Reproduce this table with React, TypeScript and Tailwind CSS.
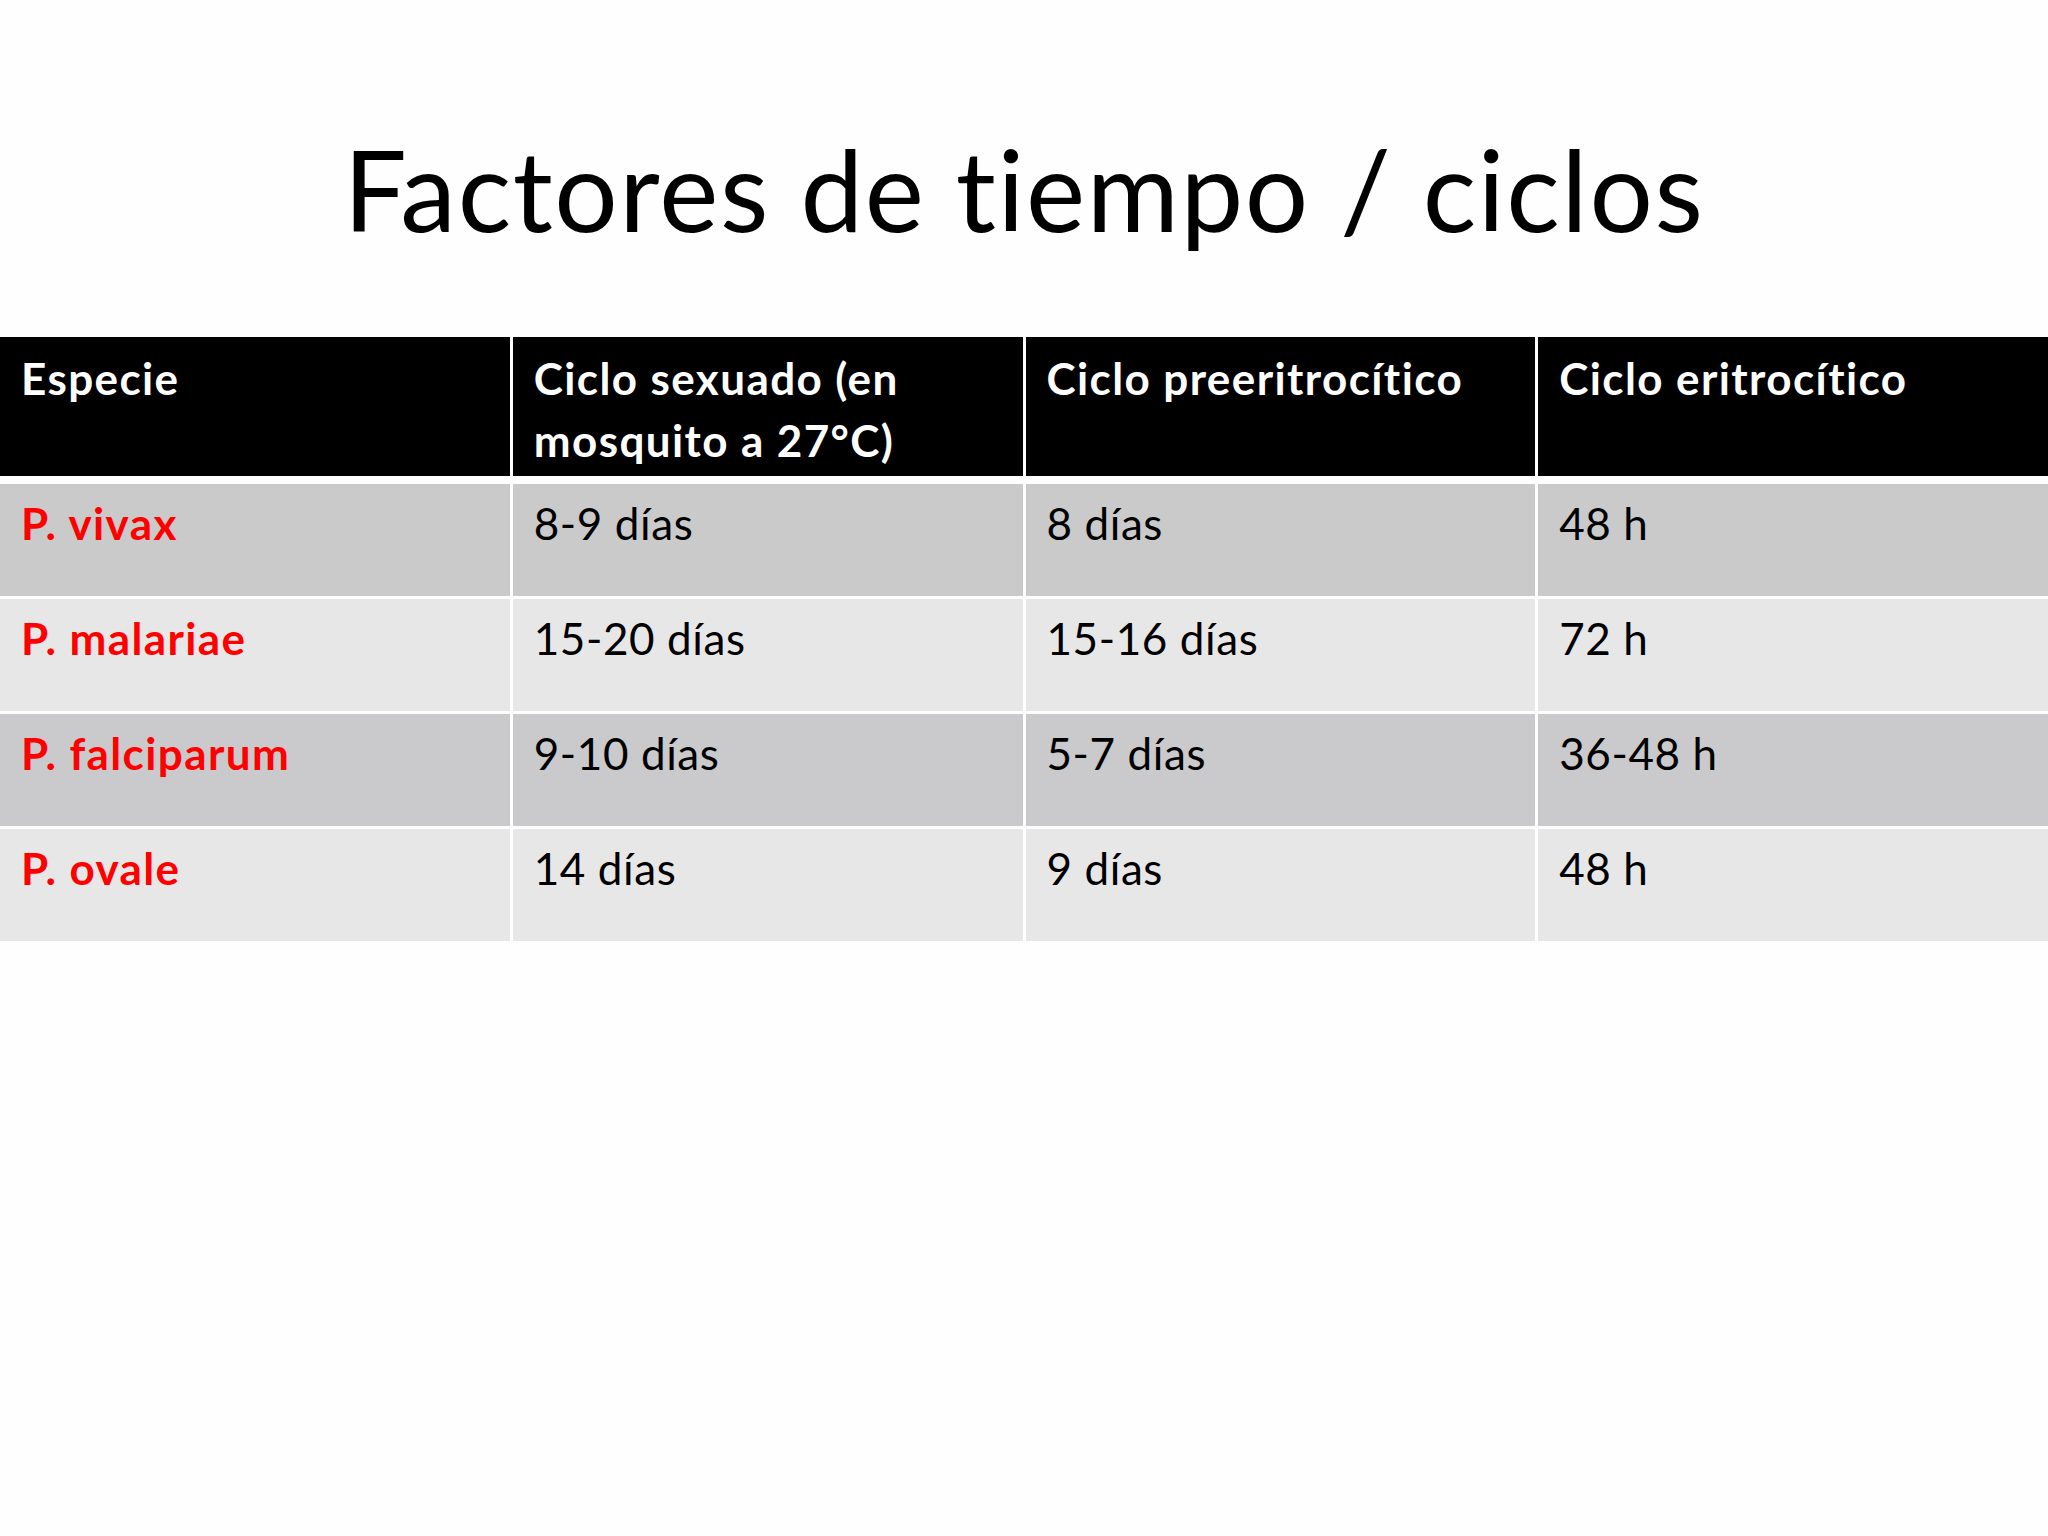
import React from "react";

const rows = [
  { sp: "P. vivax", a: "8-9 días", b: "8 días", c: "48 h", bg: "bg-[#cacaca]" },
  { sp: "P. malariae", a: "15-20 días", b: "15-16 días", c: "72 h", bg: "bg-[#e8e7e8]" },
  { sp: "P. falciparum", a: "9-10 días", b: "5-7 días", c: "36-48 h", bg: "bg-[#cac9cb]" },
  { sp: "P. ovale", a: "14 días", b: "9 días", c: "48 h", bg: "bg-[#e8e7e8]" },
];

export default function App() {
  return (
    <div
      className="w-[2048px] h-[1536px] bg-[#fefefe] flex flex-col [font-variant-ligatures:none]"
      style={{ fontFamily: "Lato, 'Noto Sans', sans-serif" }}
    >
      <h1 className="pt-[133px] h-[337px] text-center text-[112px] leading-none font-normal tracking-[1.6px] text-black">
        Factores de tiempo / ciclos
      </h1>
      <div className="grid grid-cols-4 gap-x-[3px] w-full">
        {["Especie", "Ciclo sexuado (en mosquito a 27°C)", "Ciclo preeritrocítico", "Ciclo eritrocítico"].map((h) => (
          <div
            key={h}
            className="bg-black h-[139px] pt-[10px] pl-[21px] pr-[20px] text-white font-bold text-[44px] leading-[62px] tracking-[1.4px]"
          >
            {h}
          </div>
        ))}
      </div>
      <div className="flex flex-col gap-y-[3px] mt-[8px]">
        {rows.map((r) => (
          <div key={r.sp} className="grid grid-cols-4 gap-x-[3px] w-full">
            <div className={`${r.bg} h-[112px] pt-[8px] pl-[21px] text-[44px] leading-[62px] font-bold tracking-[1.4px] text-[#ff0000]`}>
              {r.sp}
            </div>
            <div className={`${r.bg} h-[112px] pt-[8px] pl-[21px] text-[44px] leading-[62px] tracking-[0.6px] text-black`}>{r.a}</div>
            <div className={`${r.bg} h-[112px] pt-[8px] pl-[21px] text-[44px] leading-[62px] tracking-[0.6px] text-black`}>{r.b}</div>
            <div className={`${r.bg} h-[112px] pt-[8px] pl-[21px] text-[44px] leading-[62px] tracking-[0.6px] text-black`}>{r.c}</div>
          </div>
        ))}
      </div>
    </div>
  );
}
